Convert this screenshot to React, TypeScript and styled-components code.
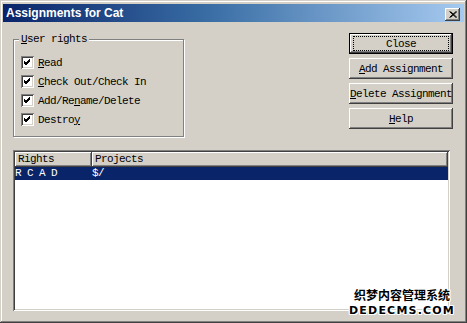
import React from 'react'
import styled, { createGlobalStyle } from 'styled-components'

const GlobalStyle = createGlobalStyle`
    html, body {
        margin: 0;
        padding: 0;
        background: #d4d0c8;
    }
`

const face = '#d4d0c8'
const mono = `'Liberation Mono', 'Courier New', monospace`

const rights = [
    { label: ['', 'R', 'ead'] },
    { label: ['', 'C', 'heck Out/Check In'] },
    { label: ['Add/Re', 'n', 'ame/Delete'] },
    { label: ['Destro', 'y', ''] },
]

const buttons = [
    { label: ['Close', '', ''], isDefault: true },
    { label: ['', 'A', 'dd Assignment'] },
    { label: ['', 'D', 'elete Assignment'] },
    { label: ['', 'H', 'elp'] },
]

const Key = ({ parts }: { parts: string[] }) => (
    <>
        {parts[0]}
        {parts[1] && <u>{parts[1]}</u>}
        {parts[2]}
    </>
)

const CheckMark = () => (
    <svg width="13" height="13" viewBox="0 0 13 13">
        <path d="M3 5 L5 7 L9 3 M3 6 L5 8 L9 4 M3 7 L5 9 L9 5" stroke="#000" strokeWidth="1" fill="none" shapeRendering="crispEdges" />
    </svg>
)

const CloseGlyph = () => (
    <svg width="8" height="7" viewBox="0 0 8 7">
        <path d="M0.5 0.5 L7 6.5 M1.5 0.5 L8 6.5 M7 0.5 L0.5 6.5 M8 0.5 L1.5 6.5" stroke="#000" strokeWidth="1" fill="none" />
    </svg>
)

const App = () => {
    return (
        <>
            <GlobalStyle />
            <Window>
                <TitleBar>
                    <Title>Assignments for Cat</Title>
                    <CloseBox><CloseGlyph /></CloseBox>
                </TitleBar>
                <Body>
                    <TopRow>
                        <GroupBox>
                            <GroupLabel><u>U</u>ser rights</GroupLabel>
                            {rights.map((r, i) => (
                                <CheckRow key={i}>
                                    <CheckBox><CheckMark /></CheckBox>
                                    <span><Key parts={r.label} /></span>
                                </CheckRow>
                            ))}
                        </GroupBox>
                        <ButtonColumn>
                            {buttons.map((b, i) => (
                                <Button key={i} $isDefault={b.isDefault}>
                                    <ButtonText $focused={b.isDefault}><Key parts={b.label} /></ButtonText>
                                </Button>
                            ))}
                        </ButtonColumn>
                    </TopRow>
                    <ListView>
                        <HeaderRow>
                            <HeaderCell $width={74}>Rights</HeaderCell>
                            <HeaderCell>Projects</HeaderCell>
                        </HeaderRow>
                        <SelectedRow>
                            <RowCell $width={77}>R C A D</RowCell>
                            <RowCell>$/</RowCell>
                        </SelectedRow>
                    </ListView>
                </Body>
                <Watermark>
                    <WatermarkCn>织梦内容管理系统</WatermarkCn>
                    <WatermarkEn>DEDECMS.COM</WatermarkEn>
                </Watermark>
            </Window>
        </>
    )
}

export default App

const Window = styled.div`
    position: relative;
    width: 467px;
    height: 323px;
    box-sizing: border-box;
    padding: 4px 3px 3px 3px;
    background: ${face};
    box-shadow: inset -1px -1px #404040, inset 1px 1px ${face}, inset -2px -2px #808080, inset 2px 2px #fff;
    display: flex;
    flex-direction: column;
    overflow: hidden;
`

const TitleBar = styled.div`
    height: 18px;
    display: flex;
    align-items: center;
    justify-content: space-between;
    padding: 0 4px 0 3px;
    background: linear-gradient(to right, #0a246a 0%, #3a6ea5 45%, #a6caf0 100%);
`

const Title = styled.div`
    color: #fff;
    font-family: 'Liberation Sans', Arial, sans-serif;
    font-weight: bold;
    font-size: 12px;
`

const CloseBox = styled.div`
    width: 15px;
    height: 13px;
    margin-top: 3px;
    background: ${face};
    display: flex;
    align-items: center;
    justify-content: center;
    box-shadow: inset -1px -1px #404040, inset 1px 1px #fff, inset -2px -2px #808080;
`

const Body = styled.div`
    flex: 1;
    display: flex;
    flex-direction: column;
    padding: 11px 11px 9px 10px;
    font-family: ${mono};
    font-size: 11px;
    letter-spacing: -0.6px;
    color: #000;
`

const TopRow = styled.div`
    display: flex;
    justify-content: space-between;
    align-items: flex-start;
`

const GroupBox = styled.div`
    position: relative;
    width: 171px;
    box-sizing: border-box;
    margin-top: 6px;
    padding: 13px 7px 7px 7px;
    border: 1px solid #808080;
    box-shadow: inset 1px 1px #fff, 1px 1px #fff;
`

const GroupLabel = styled.div`
    position: absolute;
    top: -7px;
    left: 5px;
    padding: 0 2px;
    line-height: 12px;
    background: ${face};
`

const CheckRow = styled.div`
    height: 19px;
    display: flex;
    align-items: center;
    gap: 4px;
`

const CheckBox = styled.span`
    width: 13px;
    height: 13px;
    background: #fff;
    box-shadow: inset 1px 1px #808080, inset -1px -1px #fff, inset 2px 2px #404040, inset -2px -2px ${face};
    display: flex;
`

const ButtonColumn = styled.div`
    display: flex;
    flex-direction: column;
    gap: 4px;
    width: 104px;
`

const Button = styled.div<{ $isDefault?: boolean }>`
    height: 21px;
    box-sizing: border-box;
    display: flex;
    align-items: center;
    justify-content: center;
    background: ${face};
    border: ${p => (p.$isDefault ? '1px solid #000' : 'none')};
    box-shadow: inset -1px -1px #404040, inset 1px 1px #fff, inset -2px -2px #808080;
    white-space: nowrap;
`

const ButtonText = styled.span<{ $focused?: boolean }>`
    display: flex;
    align-items: center;
    justify-content: center;
    ${p => (p.$focused ? 'width: 94px; height: 13px; border: 1px dotted #000;' : '')}
`

const ListView = styled.div`
    flex: 1;
    margin-top: 13px;
    margin-right: 3px;
    background: #fff;
    padding: 2px;
    box-shadow: inset 1px 1px #808080, inset -1px -1px #fff, inset 2px 2px #404040, inset -2px -2px ${face};
`

const HeaderRow = styled.div`
    display: flex;
    height: 15px;
`

const HeaderCell = styled.div<{ $width?: number }>`
    ${p => (p.$width ? `width: ${p.$width}px;` : 'flex: 1;')}
    padding-left: 3px;
    line-height: 15px;
    background: ${face};
    box-shadow: inset -1px -1px #404040, inset 1px 1px #fff, inset -2px -2px #808080;
`

const SelectedRow = styled.div`
    display: flex;
    height: 13px;
    background: #0a246a;
    color: #fff;
`

const RowCell = styled.div<{ $width?: number }>`
    ${p => (p.$width ? `width: ${p.$width}px;` : 'flex: 1;')}
    line-height: 13px;
    white-space: pre;
`

const Watermark = styled.div`
    position: absolute;
    right: 12px;
    top: 286px;
    display: flex;
    flex-direction: column;
    align-items: center;
    color: #000;
    font-weight: bold;
    text-shadow: 1px 0 #fff, -1px 0 #fff, 0 1px #fff, 0 -1px #fff, 1px 1px #fff, -1px -1px #fff, 1px -1px #fff, -1px 1px #fff;
`

const WatermarkCn = styled.div`
    font-family: 'Noto Sans CJK SC', sans-serif;
    font-size: 12px;
    line-height: 18px;
`

const WatermarkEn = styled.div`
    font-family: 'DejaVu Sans', sans-serif;
    font-size: 11px;
    line-height: 13px;
    letter-spacing: 1.2px;
`
